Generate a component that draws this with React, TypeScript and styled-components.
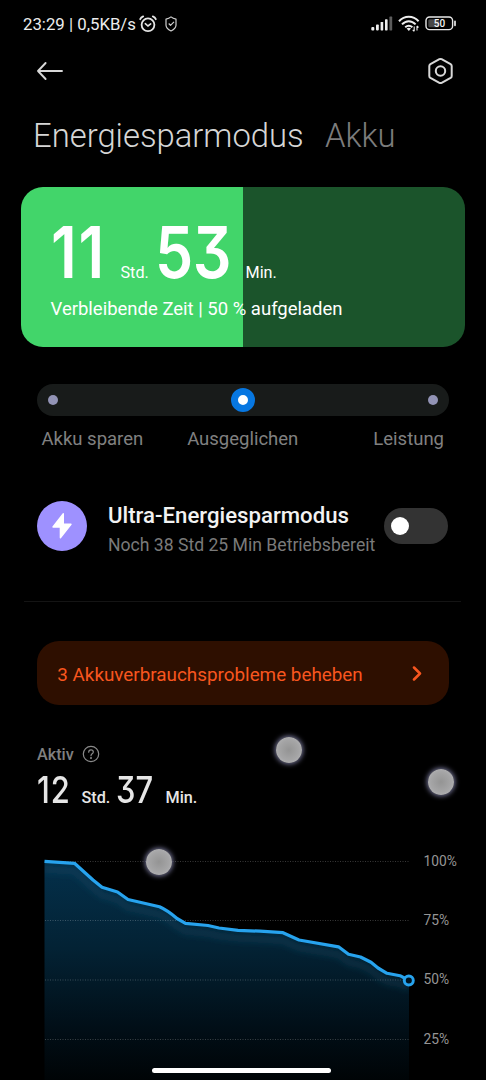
import React from 'react';
import styled, { createGlobalStyle } from 'styled-components';

const GlobalStyle = createGlobalStyle`
  *, *::before, *::after { box-sizing: border-box; }
  html, body { margin: 0; padding: 0; background: #000; }
  body { font-family: Roboto, 'Liberation Sans', sans-serif; overflow: hidden; }
`;

const Screen = styled.main`
  position: relative;
  display: flex;
  flex-direction: column;
  width: 486px;
  height: 1080px;
  overflow: hidden;
  background: #000;
  color: #e6e6e6;
  white-space: nowrap;
`;

const StatusBar = styled.header`
  display: flex;
  justify-content: space-between;
  align-items: center;
  height: 48px;
  padding: 0 29px 0 23px;
`;

const StatusGroup = styled.div<{ $gap: number }>`
  display: flex;
  align-items: center;
  gap: ${(p) => p.$gap}px;
`;

const StatusText = styled.span`
  width: 112px;
  font-size: 16.8px;
  line-height: 20px;
  color: #ececec;
`;

const Toolbar = styled.nav`
  display: flex;
  justify-content: space-between;
  align-items: center;
  height: 46px;
  padding: 0 32px 0 36px;
`;

const IconButton = styled.button`
  display: flex;
  padding: 0;
  border: 0;
  background: none;
  color: #d8d8d8;
`;

const Tabs = styled.div`
  display: flex;
  gap: 21.2px;
  height: 93px;
  padding: 22px 0 0 33px;
`;

const Tab = styled.span<{ $active?: boolean }>`
  font-size: 32.8px;
  font-weight: 300;
  line-height: 40px;
  color: ${(p) => (p.$active ? '#d6d6d6' : '#7c7c7c')};
`;

const BatteryCard = styled.section`
  height: 161px;
  margin: 0 21px;
  padding: 26px 0 0 29.5px;
  border-radius: 22px;
  background: linear-gradient(to right, #42d56a 222px, #1b542b 222px);
  color: #fff;
`;

const Duration = styled.div<{ $height: number }>`
  display: flex;
  align-items: baseline;
  height: ${(p) => p.$height}px;
`;

const Figure = styled.span<{ $size: number; $width: number; $weight: number; $spacing?: number }>`
  width: ${(p) => p.$width}px;
  font-family: Inter, Roboto, sans-serif;
  font-size: ${(p) => p.$size}px;
  font-weight: ${(p) => p.$weight};
  font-feature-settings: 'cv09' 1;
  letter-spacing: ${(p) => p.$spacing ?? 0}px;
  line-height: 1.1;
  transform: scaleX(0.85);
  transform-origin: left;
`;

const Unit = styled.span<{ $width: number; $strong?: boolean }>`
  width: ${(p) => p.$width}px;
  font-size: 16.2px;
  font-weight: ${(p) => (p.$strong ? 500 : 400)};
`;

const CardCaption = styled.p`
  margin: 10px 0 0;
  font-size: 18.5px;
  line-height: 24px;
`;

const ModeSection = styled.section`
  margin: 37px 37px 0;
`;

const Track = styled.div`
  display: flex;
  justify-content: space-between;
  align-items: center;
  height: 32px;
  padding: 0 11px;
  border-radius: 16px;
  background: #181b1a;
`;

const Stop = styled.span`
  width: 10px;
  height: 10px;
  border-radius: 50%;
  background: #9293b5;
`;

const ActiveStop = styled.span`
  width: 24px;
  height: 24px;
  border: 7px solid #0777e1;
  border-radius: 50%;
  background: #fff;
`;

const ModeLabels = styled.div`
  display: grid;
  grid-template-columns: 1fr auto 1fr;
  padding: 11px 5px 0 4.5px;
  font-size: 18.5px;
  line-height: 24px;
  color: #808080;

  > :last-child {
    text-align: right;
  }
`;

const UltraRow = styled.section`
  display: flex;
  align-items: center;
  height: 50px;
  margin: 50px 38px 0 37px;
`;

const Badge = styled.span`
  display: flex;
  align-items: center;
  justify-content: center;
  width: 50px;
  height: 50px;
  border-radius: 50%;
  background: #9e91ff;
`;

const UltraText = styled.div`
  flex: 1;
  padding: 10px 0 0 21px;
`;

const UltraTitle = styled.h2`
  margin: 0;
  font-size: 22.2px;
  font-weight: 500;
  line-height: 28px;
  color: #f2f2f2;
`;

const UltraHint = styled.p`
  margin: 0;
  font-size: 17.6px;
  line-height: 32px;
  color: #7a7a7a;
`;

const Toggle = styled.span`
  display: flex;
  align-items: center;
  width: 64px;
  height: 36px;
  padding-left: 6.5px;
  border-radius: 18px;
  background: #333;
`;

const Knob = styled.span`
  width: 18px;
  height: 18px;
  border-radius: 50%;
  background: #fff;
`;

const Divider = styled.hr`
  width: 437px;
  height: 1px;
  margin: 50px 0 39px 24px;
  border: 0;
  background: #141414;
`;

const Warning = styled.section`
  display: flex;
  justify-content: space-between;
  align-items: center;
  height: 64px;
  margin: 0 37px;
  padding: 1px 27px 0 20.3px;
  border-radius: 22px;
  background: #2e0f00;
  color: #f8561f;
  font-size: 18.85px;
  line-height: 24px;
`;

const WarningText = styled.span`
  padding-top: 2px;
`;

const ActiveSection = styled.section`
  height: 131px;
  padding: 39px 0 0 37px;
`;

const ActiveLabel = styled.div`
  display: flex;
  align-items: center;
  gap: 8px;
  height: 20px;
  margin-bottom: 5.5px;
  font-size: 16.2px;
  font-weight: 500;
  line-height: 20px;
  color: #808080;

  > span {
    padding-top: 2px;
  }
`;

const ChartSection = styled.section`
  display: flex;
  height: 244px;
`;

const ChartSvg = styled.svg`
  flex: none;
  width: 418px;
  height: 244px;
`;

const Scale = styled.div`
  display: flex;
  flex-direction: column;
  gap: 39.4px;
  padding: 14.5px 0 0 5.5px;
  font-size: 13.8px;
  line-height: 20px;
  color: #959595;
`;

const TouchDot = styled.span<{ $x: number; $y: number }>`
  position: absolute;
  left: ${(p) => p.$x - 13}px;
  top: ${(p) => p.$y - 13}px;
  width: 26px;
  height: 26px;
  border-radius: 50%;
  background: radial-gradient(circle, #949494 0%, #a5a5a6 55%, #bdbdc3 100%);
  box-shadow: 0 0 5px 1px #77779a;
`;

const HomeBar = styled.span`
  position: absolute;
  left: 151.5px;
  top: 1067.5px;
  width: 179.5px;
  height: 5px;
  border-radius: 3px;
  background: #fff;
`;

const AlarmIcon = () => (
  <svg width="18" height="18" viewBox="0 0 18 18" fill="none" stroke="#e4e4e4" strokeWidth="1.8" strokeLinecap="round">
    <circle cx="9" cy="9.8" r="6.4" />
    <path d="M6.3 8.7 9 11l2.7-2.1" strokeWidth="1.6" />
    <path d="M1.2 4.2Q2 2.3 4.2 1.4M16.8 4.2Q16 2.3 13.8 1.4" />
  </svg>
);

const ShieldIcon = () => (
  <svg width="12" height="16" viewBox="0 0 12 16" fill="none" stroke="#d0d0d0" strokeWidth="1.2" strokeLinejoin="round">
    <path d="M6 .9Q8 2.5 11 3.1v6.2Q10.8 12.8 6 15 1.2 12.8 1 9.3V3.1Q4 2.5 6 .9Z" />
    <path d="m3.7 7.5 1.8 1.9L9 5.9" />
  </svg>
);

const SignalIcon = () => (
  <svg width="22" height="15" viewBox="0 0 22 15" fill="#eee">
    <rect x="0.3" y="11" width="3" height="3.4" rx="1" />
    <rect x="5" y="8.5" width="2.8" height="5.9" rx=".8" />
    <rect x="9.6" y="6" width="2.6" height="8.4" rx=".6" />
    <rect x="14" y="3.3" width="2.6" height="11.1" rx=".6" />
    <rect x="18.4" y=".6" width="2.8" height="13.8" rx=".6" fill="#5c5c5c" />
  </svg>
);

const WifiIcon = () => (
  <svg width="22" height="17" viewBox="0 0 22 17" fill="none" stroke="#eee" strokeWidth="2">
    <path d="M1 6.2Q5.1 1.8 10.8 1.8T20.6 6.2" />
    <path d="M4 9.4Q7 6.2 10.8 6.2T17.6 9.4" />
    <path d="M7.2 12.3q3.6-3.1 7.2 0" />
    <path d="M8.6 13.6q2.2-1.5 4.4 0L10.8 16Z" fill="#eee" stroke="none" />
    <path d="M16.2 11.5v4.8M19 11v4.5M16.2 16.3l-1.5-1.5M19 11l1.5 1.5" strokeWidth="1.1" />
  </svg>
);

const BatteryIcon = () => (
  <svg width="32" height="15" viewBox="0 0 32 15">
    <rect x="1" y="1" width="26.6" height="12.6" rx="3.6" fill="none" stroke="#e8e8e8" strokeWidth="1.4" />
    <rect x="3.3" y="3.3" width="11" height="8" rx="1.5" fill="#484848" />
    <path d="M30 5.5v3.8" stroke="#ddd" strokeWidth="1.8" strokeLinecap="round" />
    <text x="14.4" y="11" textAnchor="middle" fontFamily="Roboto, sans-serif" fontSize="10" fontWeight="500" fill="#f4f4f4">
      50
    </text>
  </svg>
);

const BackIcon = () => (
  <svg width="28" height="20" viewBox="0 0 28 20" fill="none" stroke="currentColor" strokeWidth="1.9" strokeLinecap="round" strokeLinejoin="round">
    <path d="M26 10H2M9.6 2 2 10l7.6 8" />
  </svg>
);

const SettingsIcon = () => (
  <svg width="27" height="28" viewBox="0 0 27 28" fill="none" stroke="currentColor" strokeWidth="2" strokeLinejoin="round">
    <path d="M12.4 2.2q1.1-.6 2.2 0l9 4.9q1.1.7 1.1 2v9.8q0 1.3-1.1 2l-9 4.9q-1.1.6-2.2 0l-9-4.9q-1.1-.7-1.1-2V9.1q0-1.3 1.1-2Z" />
    <circle cx="13.5" cy="14" r="4.7" />
  </svg>
);

const BoltIcon = () => (
  <svg width="22" height="28" viewBox="0 0 22 28" fill="#fff" stroke="#fff" strokeWidth="1.4" strokeLinejoin="round">
    <path d="M12.3 1.7 2 15h7.4v10.8L20 12.3h-7.7Z" />
  </svg>
);

const ChevronIcon = () => (
  <svg width="10" height="16" viewBox="0 0 10 16" fill="none" stroke="currentColor" strokeWidth="2.5" strokeLinecap="round" strokeLinejoin="round">
    <path d="m2 1.5 6 6-6 6" />
  </svg>
);

const HelpIcon = () => (
  <svg width="18" height="18" viewBox="0 0 18 18" fill="none" stroke="#8a8a8a" strokeWidth="1.2" strokeLinecap="round">
    <circle cx="9" cy="9" r="7.7" />
    <path d="M6.7 7.2Q6.8 4.9 9 4.9t2.3 2q0 1-1.2 1.9T9 10.7" />
    <circle cx="9" cy="12.9" r=".4" fill="#8a8a8a" />
  </svg>
);

const LINE =
  'M44.5 25.3 74.5 27.3 93 44 102 51.3 117.5 56 128 63.5 159.5 70.7Q168 74.5 177 82.5L185.5 87.3 208 89.5 219 92 238 94.3 260 95.2 283 96.7 299 104 338.5 110.8 348.5 118.3 360.5 121 371 126.3 378 132 387 137.3 400 139.7 409 144.5';

const Chart = () => (
  <ChartSvg viewBox="0 0 418 244">
    <defs>
      <linearGradient id="area" x1="0" y1="25" x2="0" y2="244" gradientUnits="userSpaceOnUse">
        <stop offset="0" stopColor="#04304b" />
        <stop offset="0.4" stopColor="#032234" />
        <stop offset="0.75" stopColor="#010f18" />
        <stop offset="1" stopColor="#000406" />
      </linearGradient>
      <clipPath id="areaClip">
        <path d={`${LINE}V244H44.5Z`} />
      </clipPath>
      <filter id="glow" x="-10%" y="-30%" width="120%" height="160%">
        <feGaussianBlur stdDeviation="3" />
      </filter>
    </defs>
    <path d={`${LINE}V244H44.5Z`} fill="url(#area)" />
    <g clipPath="url(#areaClip)">
      <path d={LINE} transform="translate(0 8)" fill="none" stroke="#1d5a78" strokeOpacity=".28" strokeWidth="7" filter="url(#glow)" />
    </g>
    {[25.5, 84.5, 144, 203.5].map((y) => (
      <path key={y} d={`M45 ${y}H409`} stroke="#fff" strokeOpacity=".22" strokeDasharray="1 1.5" />
    ))}
    <path d={LINE} fill="none" stroke="#27a3ee" strokeWidth="3.2" strokeLinejoin="round" />
    <circle cx="408.8" cy="144.5" r="4.5" fill="#00131f" stroke="#27a3ee" strokeWidth="2.9" />
  </ChartSvg>
);

export default function App() {
  return (
    <>
      <GlobalStyle />
      <Screen>
        <StatusBar>
          <StatusGroup $gap={4}>
            <StatusText>23:29 | 0,5KB/s</StatusText>
            <AlarmIcon />
            <span />
            <ShieldIcon />
          </StatusGroup>
          <StatusGroup $gap={5}>
            <SignalIcon />
            <WifiIcon />
            <BatteryIcon />
          </StatusGroup>
        </StatusBar>
        <Toolbar>
          <IconButton aria-label="Zurück">
            <BackIcon />
          </IconButton>
          <IconButton aria-label="Einstellungen">
            <SettingsIcon />
          </IconButton>
        </Toolbar>
        <Tabs>
          <Tab $active>Energiesparmodus</Tab>
          <Tab>Akku</Tab>
        </Tabs>
        <BatteryCard>
          <Duration $height={74}>
            <Figure $size={71.5} $width={70} $weight={600} $spacing={2}>11</Figure>
            <Unit $width={34.5}>Std.</Unit>
            <Figure $size={71.5} $width={90.5} $weight={600} $spacing={-0.5}>53</Figure>
            <Unit $width={40}>Min.</Unit>
          </Duration>
          <CardCaption>Verbleibende Zeit | 50 % aufgeladen</CardCaption>
        </BatteryCard>
        <ModeSection>
          <Track>
            <Stop />
            <ActiveStop />
            <Stop />
          </Track>
          <ModeLabels>
            <span>Akku sparen</span>
            <span>Ausgeglichen</span>
            <span>Leistung</span>
          </ModeLabels>
        </ModeSection>
        <UltraRow>
          <Badge>
            <BoltIcon />
          </Badge>
          <UltraText>
            <UltraTitle>Ultra-Energiesparmodus</UltraTitle>
            <UltraHint>Noch 38 Std 25 Min Betriebsbereit</UltraHint>
          </UltraText>
          <Toggle>
            <Knob />
          </Toggle>
        </UltraRow>
        <Divider />
        <Warning>
          <WarningText>3 Akkuverbrauchsprobleme beheben</WarningText>
          <ChevronIcon />
        </Warning>
        <ActiveSection>
          <ActiveLabel>
            <span>Aktiv</span>
            <HelpIcon />
          </ActiveLabel>
          <Duration $height={44}>
            <Figure $size={36.4} $width={44.5} $weight={550} $spacing={1.2}>12</Figure>
            <Unit $width={34.5} $strong>Std.</Unit>
            <Figure $size={36.4} $width={49.5} $weight={550}>37</Figure>
            <Unit $width={40} $strong>Min.</Unit>
          </Duration>
        </ActiveSection>
        <ChartSection>
          <Chart />
          <Scale>
            <span>100%</span>
            <span>75%</span>
            <span>50%</span>
            <span>25%</span>
          </Scale>
        </ChartSection>
        <TouchDot $x={289.3} $y={750} />
        <TouchDot $x={440.5} $y={782} />
        <TouchDot $x={159.3} $y={862} />
        <HomeBar />
      </Screen>
    </>
  );
}
